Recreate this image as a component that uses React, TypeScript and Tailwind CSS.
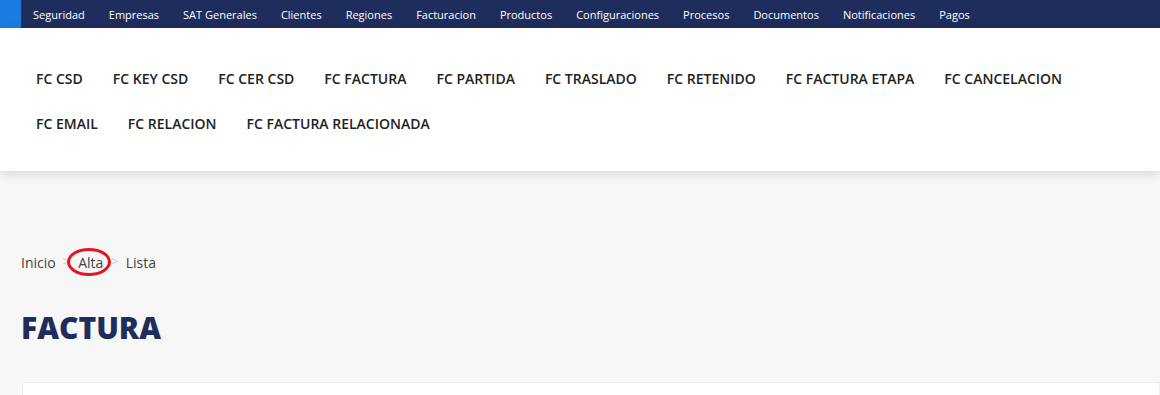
import React from 'react';

const topMenu = [
  'Seguridad',
  'Empresas',
  'SAT Generales',
  'Clientes',
  'Regiones',
  'Facturacion',
  'Productos',
  'Configuraciones',
  'Procesos',
  'Documentos',
  'Notificaciones',
  'Pagos',
];

const subMenu = [
  'FC CSD',
  'FC KEY CSD',
  'FC CER CSD',
  'FC FACTURA',
  'FC PARTIDA',
  'FC TRASLADO',
  'FC RETENIDO',
  'FC FACTURA ETAPA',
  'FC CANCELACION',
  'FC EMAIL',
  'FC RELACION',
  'FC FACTURA RELACIONADA',
];

export default function App() {
  return (
    <div
      className="min-h-[395px] bg-[#f7f7f7] overflow-hidden"
      style={{ fontFamily: '"Open Sans", "Noto Sans", sans-serif' }}
    >
      {/* Top bar */}
      <div className="flex h-[28px] bg-[#1f2d5c]">
        <div className="w-[21px] bg-[#1a7be0]" />
        <ul className="flex items-center">
          {topMenu.map((m) => (
            <li key={m} className="px-3 text-[11px] text-white leading-none">
              {m}
            </li>
          ))}
        </ul>
      </div>

      {/* Module menu */}
      <div className="relative bg-white shadow-[0_3px_10px_rgba(0,0,0,0.13)]">
        <ul className="flex flex-wrap pl-[21px] pr-[36px] pt-[28px] pb-[25px]">
          {subMenu.map((s) => (
            <li
              key={s}
              className="h-[45px] flex items-center px-[15px] text-[14px] font-semibold text-[#222]"
            >
              {s}
            </li>
          ))}
        </ul>
      </div>

      {/* Content */}
      <div className="pl-[21px] pt-[79px]">
        <nav className="flex items-center text-[14px] text-[#444] h-[24px]">
          <span>Inicio</span>
          <span className="text-[#c8c8c8] text-[13px] ml-[7px]">&gt;</span>
          <span className="relative ml-[8px]">
            <span className="absolute -left-[11px] -top-[4px] w-[44px] h-[28px] rounded-[50%] border-[3px] border-[#e8141c]" />
            <span className="relative">Alta</span>
          </span>
          <span className="text-[#c8c8c8] text-[13px] ml-[8px] mr-[7px]">&gt;</span>
          <span>Lista</span>
        </nav>

        <h1 className="mt-[34px] text-[30px] leading-[40px] font-extrabold text-[#1f2d5c]">
          FACTURA
        </h1>

        <div className="mt-[34px] ml-[1px] h-[60px] bg-white border border-[#eeeeee]" />
      </div>
    </div>
  );
}
